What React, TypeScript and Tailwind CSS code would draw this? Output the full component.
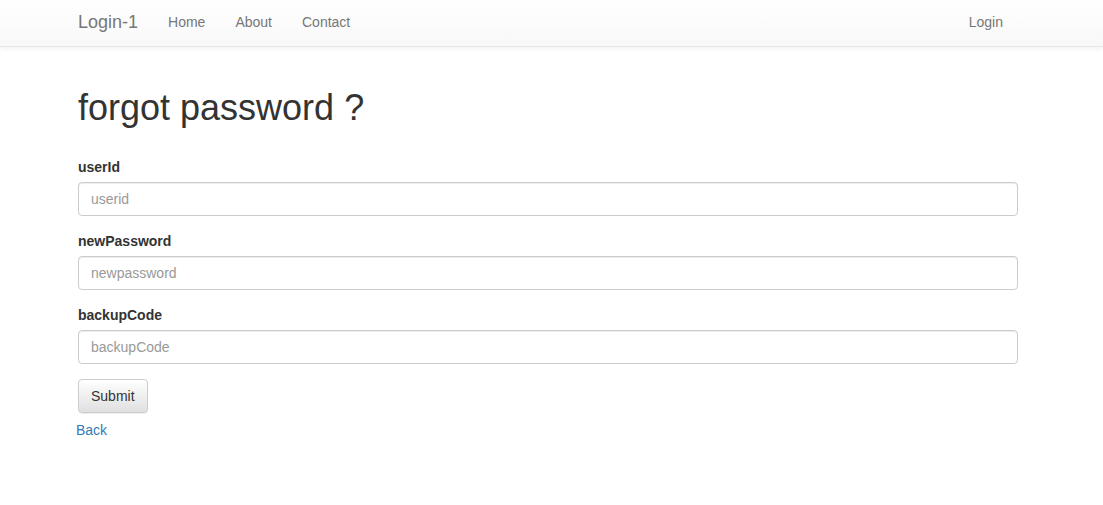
import React from 'react';

const font = { fontFamily: '"Liberation Sans", Arial, sans-serif' };

const Field: React.FC<{ label: string; placeholder: string }> = ({ label, placeholder }) => (
  <div className="mb-[15px]">
    <label className="mb-[5px] block text-[14px] font-bold leading-[20px] text-[#333]">{label}</label>
    <input
      type="text"
      placeholder={placeholder}
      className="block h-[34px] w-full rounded-[4px] border border-[#ccc] bg-white px-[12px] py-[6px] text-[14px] text-[#555] shadow-[inset_0_1px_1px_rgba(0,0,0,0.075)] outline-none placeholder:text-[#999]"
    />
  </div>
);

export default function App() {
  return (
    <div className="min-h-screen bg-white" style={font}>
      {/* Navbar */}
      <nav className="h-[47px] border-b border-[#e7e7e7] bg-gradient-to-b from-white to-[#f8f8f8] shadow-[0_1px_5px_rgba(0,0,0,0.075)]">
        <div className="ml-[63px] flex h-full w-[970px] items-center pb-[2px]">
          <a className="px-[15px] text-[18px] leading-[20px] text-[#777]">Login-1</a>
          <ul className="flex text-[14px] leading-[20px] text-[#777]">
            <li className="px-[15px]">Home</li>
            <li className="px-[15px]">About</li>
            <li className="px-[15px]">Contact</li>
          </ul>
          <div className="ml-auto pr-[30px] text-[14px] leading-[20px] text-[#777]">Login</div>
        </div>
      </nav>

      {/* Content */}
      <div className="ml-[78px] w-[940px] pt-[41px]">
        <h1 className="mb-[29px] text-[36px] leading-[40px] text-[#333]">forgot password ?</h1>
        <form>
          <Field label="userId" placeholder="userid" />
          <Field label="newPassword" placeholder="newpassword" />
          <Field label="backupCode" placeholder="backupCode" />
          <button
            type="button"
            className="h-[34px] rounded-[4px] border border-[#ccc] bg-gradient-to-b from-white to-[#e0e0e0] px-[12px] text-[14px] text-[#333] shadow-[inset_0_1px_0_rgba(255,255,255,0.15),0_1px_1px_rgba(0,0,0,0.075)]"
          >
            Submit
          </button>
        </form>
        <a className="-ml-[2px] mt-[7px] block text-[14px] leading-[20px] text-[#337ab7]">Back</a>
      </div>
    </div>
  );
}
